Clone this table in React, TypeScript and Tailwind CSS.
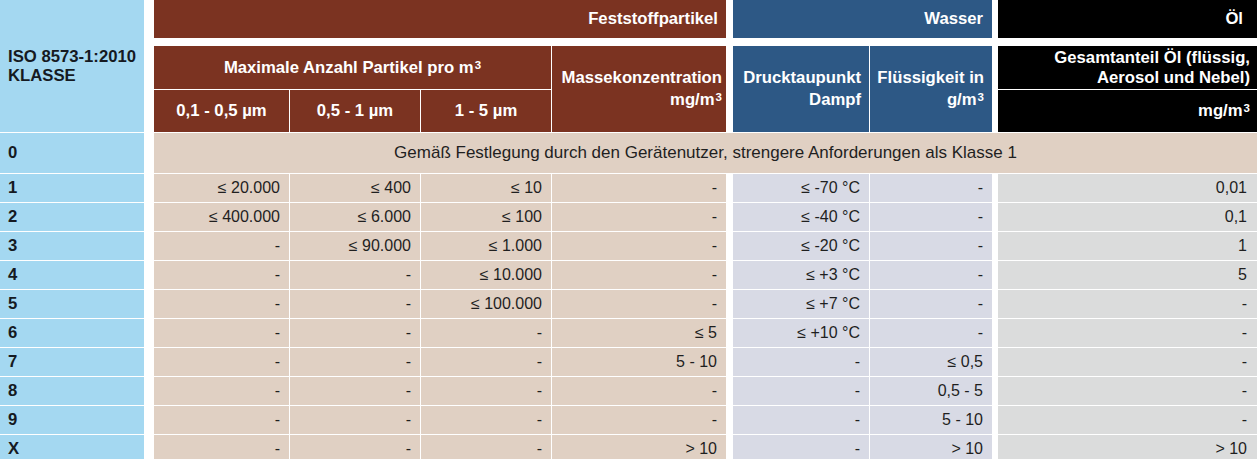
const cols = "grid grid-cols-[144px_8px_135px_130px_130px_174px_5px_136px_122px_4px_1fr] gap-[1px]";

const rows: string[][] = [
  ["1", "≤ 20.000", "≤ 400", "≤ 10", "-", "≤ -70 °C", "-", "0,01"],
  ["2", "≤ 400.000", "≤ 6.000", "≤ 100", "-", "≤ -40 °C", "-", "0,1"],
  ["3", "-", "≤ 90.000", "≤ 1.000", "-", "≤ -20 °C", "-", "1"],
  ["4", "-", "-", "≤ 10.000", "-", "≤ +3 °C", "-", "5"],
  ["5", "-", "-", "≤ 100.000", "-", "≤ +7 °C", "-", "-"],
  ["6", "-", "-", "-", "≤ 5", "≤ +10 °C", "-", "-"],
  ["7", "-", "-", "-", "5 - 10", "-", "≤ 0,5", "-"],
  ["8", "-", "-", "-", "-", "-", "0,5 - 5", "-"],
  ["9", "-", "-", "-", "-", "-", "5 - 10", "-"],
  ["X", "-", "-", "-", "> 10", "-", "> 10", "> 10"],
];

function Sup({ children }: { children: React.ReactNode }) {
  return <sup className="text-[11.5px] relative -top-[4px] ml-[1px]">{children}</sup>;
}

function Header() {
  const brown = "bg-[#7b3321] text-white font-bold";
  const blue = "bg-[#2d5885] text-white font-bold";
  const black = "bg-black text-white font-bold";
  return (
    <div className={`${cols} grid-rows-[38px_6px_43px_42px] text-[16.7px]`}>
      <div className="col-start-1 row-start-1 row-span-4 bg-[#a4d8f1] text-[#151a22] font-bold flex flex-col justify-center pl-2 leading-[19px]">
        <span>ISO 8573-1:2010</span>
        <span>KLASSE</span>
      </div>

      <div className={`${brown} col-start-3 col-span-4 row-start-1 flex items-center justify-end pr-2`}>
        Feststoffpartikel
      </div>
      <div className={`${blue} col-start-8 col-span-2 row-start-1 flex items-center justify-end pr-[9px]`}>
        Wasser
      </div>
      <div className={`${black} col-start-11 row-start-1 flex items-center justify-end pr-[14px]`}>
        Öl
      </div>

      <div className={`${brown} col-start-3 col-span-3 row-start-3 flex items-center justify-center`}>
        <span>
          Maximale Anzahl Partikel pro m<Sup>3</Sup>
        </span>
      </div>
      <div className={`${brown} col-start-6 row-start-3 row-span-2 flex flex-col justify-center items-end pr-[4px] leading-[22px]`}>
        <span>Massekonzentration</span>
        <span>
          mg/m<Sup>3</Sup>
        </span>
      </div>
      <div className={`${brown} col-start-3 row-start-4 flex items-center justify-center`}>0,1 - 0,5 µm</div>
      <div className={`${brown} col-start-4 row-start-4 flex items-center justify-center`}>0,5 - 1 µm</div>
      <div className={`${brown} col-start-5 row-start-4 flex items-center justify-center`}>1 - 5 µm</div>

      <div className={`${blue} col-start-8 row-start-3 row-span-2 flex flex-col justify-center items-end pr-2 leading-[22px]`}>
        <span>Drucktaupunkt</span>
        <span>Dampf</span>
      </div>
      <div className={`${blue} col-start-9 row-start-3 row-span-2 flex flex-col justify-center items-end pr-2 leading-[22px]`}>
        <span>Flüssigkeit in</span>
        <span>
          g/m<Sup>3</Sup>
        </span>
      </div>

      <div className={`${black} col-start-11 row-start-3 flex flex-col justify-center items-end pr-[7px] leading-[20px]`}>
        <span>Gesamtanteil Öl (flüssig,</span>
        <span>Aerosol und Nebel)</span>
      </div>
      <div className={`${black} col-start-11 row-start-4 flex items-center justify-end pr-[7px]`}>
        <span>
          mg/m<Sup>3</Sup>
        </span>
      </div>
    </div>
  );
}

function Cell({ bg, pr = "pr-[9px]", children }: { bg: string; pr?: string; children: React.ReactNode }) {
  return <div className={`${bg} flex items-center justify-end ${pr}`}>{children}</div>;
}

export default function App() {
  const beige = "bg-[#e0d0c3]";
  const lilac = "bg-[#d8dae5]";
  const grey = "bg-[#dbdcdc]";
  return (
    <div className="w-[1257px] h-[459px] overflow-hidden bg-white font-['Liberation_Sans',Arial,sans-serif]">
      <Header />
      <div className={`${cols} mt-[1px] grid-rows-[40px] auto-rows-[28px] text-[16px] text-[#1f1f1f]`}>
        <div className="bg-[#a4d8f1] text-[#151a22] font-bold text-[16.7px] flex items-center pl-2">0</div>
        <div />
        <div className={`${beige} col-span-9 flex items-center justify-center text-[17px]`}>
          Gemäß Festlegung durch den Gerätenutzer, strengere Anforderungen als Klasse 1
        </div>
        {rows.map((r) => (
          <Row key={r[0]} r={r} beige={beige} lilac={lilac} grey={grey} />
        ))}
      </div>
    </div>
  );
}

function Row({ r, beige, lilac, grey }: { r: string[]; beige: string; lilac: string; grey: string }) {
  return (
    <>
      <div className="bg-[#a4d8f1] text-[#151a22] font-bold text-[16.7px] flex items-center pl-2">{r[0]}</div>
      <div />
      <Cell bg={beige}>{r[1]}</Cell>
      <Cell bg={beige}>{r[2]}</Cell>
      <Cell bg={beige}>{r[3]}</Cell>
      <Cell bg={beige}>{r[4]}</Cell>
      <div />
      <Cell bg={lilac}>{r[5]}</Cell>
      <Cell bg={lilac}>{r[6]}</Cell>
      <div />
      <Cell bg={grey} pr="pr-[10px]">
        {r[7]}
      </Cell>
    </>
  );
}
